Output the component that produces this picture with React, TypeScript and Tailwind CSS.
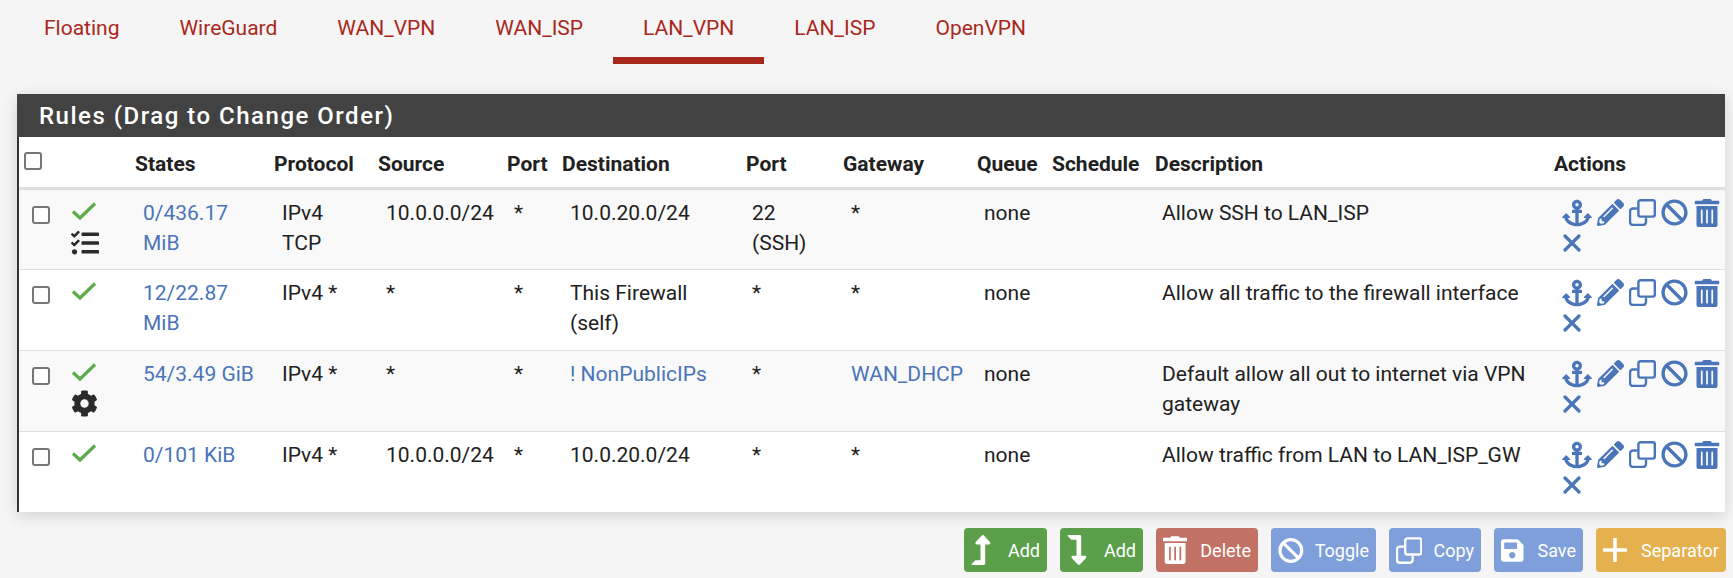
import {
  FaAnchor,
  FaBan,
  FaCog,
  FaLevelDownAlt,
  FaLevelUpAlt,
  FaPencilAlt,
  FaSave,
  FaTasks,
  FaTrashAlt,
} from "react-icons/fa";
import type { ReactNode } from "react";

const tabs = ["Floating", "WireGuard", "WAN_VPN", "WAN_ISP", "LAN_VPN", "LAN_ISP", "OpenVPN"];

const heads = [
  { label: "States", w: "w-[139px]" },
  { label: "Protocol", w: "w-[104px]" },
  { label: "Source", w: "w-[129px]" },
  { label: "Port", w: "w-[55px]" },
  { label: "Destination", w: "w-[184px]" },
  { label: "Port", w: "w-[97px]" },
  { label: "Gateway", w: "w-[134px]" },
  { label: "Queue", w: "w-[75px]" },
  { label: "Schedule", w: "w-[103px]" },
  { label: "Description", w: "w-[399px]" },
  { label: "Actions", w: "" },
];

type Rule = {
  states: string;
  proto: string;
  source: string;
  port: string;
  dest: string;
  destLink?: boolean;
  dport: string;
  gateway: string;
  gatewayLink?: boolean;
  desc: string;
  extra?: ReactNode;
  bg: string;
};

const rules: Rule[] = [
  {
    states: "0/436.17 MiB",
    proto: "IPv4 TCP",
    source: "10.0.0.0/24",
    port: "*",
    dest: "10.0.20.0/24",
    dport: "22 (SSH)",
    gateway: "*",
    desc: "Allow SSH to LAN_ISP",
    extra: <FaTasks className="text-[#2b2b2b] text-[28px] mt-[8px]" />,
    bg: "bg-[#f9f9f9]",
  },
  {
    states: "12/22.87 MiB",
    proto: "IPv4 *",
    source: "*",
    port: "*",
    dest: "This Firewall (self)",
    dport: "*",
    gateway: "*",
    desc: "Allow all traffic to the firewall interface",
    bg: "bg-white",
  },
  {
    states: "54/3.49 GiB",
    proto: "IPv4 *",
    source: "*",
    port: "*",
    dest: "! NonPublicIPs",
    destLink: true,
    dport: "*",
    gateway: "WAN_DHCP",
    gatewayLink: true,
    desc: "Default allow all out to internet via VPN gateway",
    extra: <FaCog className="text-[#2b2b2b] text-[27px] mt-[8px]" />,
    bg: "bg-[#f9f9f9]",
  },
  {
    states: "0/101 KiB",
    proto: "IPv4 *",
    source: "10.0.0.0/24",
    port: "*",
    dest: "10.0.20.0/24",
    dport: "*",
    gateway: "*",
    desc: "Allow traffic from LAN to LAN_ISP_GW",
    bg: "bg-white",
  },
];

const Check = () => (
  <svg viewBox="0 0 26 20" className="w-[26px] h-[20px]">
    <path d="M2 10.5 L9 17 L24 2.5" fill="none" stroke="#5cab4b" strokeWidth="3.2" />
  </svg>
);

const Cross = ({ className }: { className: string }) => (
  <svg viewBox="0 0 18 18" className={className}>
    <path d="M2 2 L16 16 M16 2 L2 16" fill="none" stroke="currentColor" strokeWidth="3.2" strokeLinecap="round" />
  </svg>
);

const Plus = () => (
  <svg viewBox="0 0 24 24" className="w-[24px] h-[24px] text-white">
    <path d="M12 1 V23 M1 12 H23" fill="none" stroke="currentColor" strokeWidth="3.6" strokeLinecap="round" />
  </svg>
);

const Clone = () => (
  <svg viewBox="0 0 27 27" className="w-[27px] h-[27px]">
    <g fill="none" stroke="currentColor" strokeWidth="2.4">
      <path d="M8.5 9.5 H4 a3 3 0 0 0 -3 3 V23 a3 3 0 0 0 3 3 H14 a3 3 0 0 0 3 -3 V18.5" />
      <rect x="9.4" y="1.2" width="16.4" height="16.4" rx="2" />
    </g>
  </svg>
);

const Actions = () => (
  <div className="flex flex-wrap items-center gap-x-[5px] gap-y-[6px] text-[#4a75b8] text-[27px] w-[164px]">
    <FaAnchor className="text-[30px]" />
    <FaPencilAlt />
    <Clone />
    <FaBan />
    <FaTrashAlt className="text-[28px]" />
    <Cross className="w-[18px] h-[18px] ml-[1px]" />
  </div>
);

const Box = ({ className }: { className: string }) => (
  <input
    type="checkbox"
    className={`appearance-none w-[18px] h-[18px] block rounded-[3px] border-2 border-[#767676] bg-white ${className}`}
  />
);

const FooterButton = ({
  icon,
  label,
  color,
  gap,
}: {
  icon: ReactNode;
  label: string;
  color: string;
  gap: string;
}) => (
  <button className={`h-[44px] flex items-center rounded-[4px] px-[7px] text-white text-[18px] ${gap} ${color}`}>
    {icon}
    <span>{label}</span>
  </button>
);

const App = () => {
  return (
    <div className="w-[1733px] h-[578px] overflow-hidden bg-[#f5f5f5] font-['Roboto',sans-serif]">
      {/* TABS */}
      <div className="flex h-[64px] pl-[14px] text-[21px] text-[#a9281c]">
        {tabs.map((tab) => (
          <div
            key={tab}
            className={`px-[30px] pt-[13px] ${tab === "LAN_VPN" ? "border-b-[7px] border-[#a9281c]" : ""}`}
          >
            {tab}
          </div>
        ))}
      </div>

      {/* PANEL */}
      <div className="ml-[17px] mt-[30px] w-[1708px] bg-white shadow-[0_4px_14px_rgba(0,0,0,0.14)]">
        <h2 className="h-[43px] bg-[#424242] pl-[22px] flex items-center text-white text-[24px] font-medium tracking-[1.5px]">
          Rules (Drag to Change Order)
        </h2>
        <div className="border-l-2 border-[#333] h-[375px]">
          <table className="w-full table-fixed text-[21px] leading-[30px] text-[#212121]">
            <colgroup>
              <col className="w-[43px]" />
              <col className="w-[73px]" />
              {heads.map((h, i) => (
                <col key={i} className={h.w} />
              ))}
            </colgroup>
            <thead>
              <tr className="h-[51px] border-b-[3px] border-[#dedede]">
                <th className="pl-[5px] align-top pt-[15px]">
                  <Box className="" />
                </th>
                <th />
                {heads.map((h, i) => (
                  <th key={i} className="text-left font-bold text-[21px] pt-[5px] whitespace-nowrap">
                    {h.label}
                  </th>
                ))}
              </tr>
            </thead>
            <tbody>
              {rules.map((r, i) => (
                <tr key={i} className={`h-[81px] border-b border-[#dedede] last:border-b-0 align-top ${r.bg}`}>
                  <td className="pl-[13px] pt-[16px]">
                    <Box className="" />
                  </td>
                  <td className="pl-[9px] pt-[11px]">
                    <Check />
                    {r.extra}
                  </td>
                  <td className="pl-2 pt-[8px] pr-[16px] text-[#4a75b8]">{r.states}</td>
                  <td className="pl-2 pt-[8px] pr-4">{r.proto}</td>
                  <td className="pl-2 pt-[8px] whitespace-nowrap">{r.source}</td>
                  <td className="pl-[7px] pt-[8px]">{r.port}</td>
                  <td className={`pl-2 pt-[8px] pr-2 ${r.destLink ? "text-[#4a75b8]" : ""}`}>{r.dest}</td>
                  <td className="pl-[6px] pt-[8px] pr-3">{r.dport}</td>
                  <td className={`pl-2 pt-[8px] ${r.gatewayLink ? "text-[#4a75b8]" : ""}`}>{r.gateway}</td>
                  <td className="pl-[7px] pt-[8px]">none</td>
                  <td />
                  <td className="pl-[7px] pt-[8px] pr-2">{r.desc}</td>
                  <td className="pl-2 pt-[8px]">
                    <Actions />
                  </td>
                </tr>
              ))}
            </tbody>
          </table>
        </div>
      </div>

      {/* FOOTER BUTTONS */}
      <div className="mt-[16px] w-[1726px] flex justify-end gap-[13px]">
        <FooterButton icon={<FaLevelUpAlt className="text-[30px] -ml-[5px]" />} label="Add" color="bg-[#5c9f4a]" gap="gap-[12px] w-[83px]" />
        <FooterButton icon={<FaLevelDownAlt className="text-[30px] -ml-[5px]" />} label="Add" color="bg-[#5c9f4a]" gap="gap-[12px] w-[83px]" />
        <FooterButton icon={<FaTrashAlt className="text-[28px]" />} label="Delete" color="bg-[#c27264]" gap="gap-[13px] w-[102px]" />
        <FooterButton icon={<FaBan className="text-[27px]" />} label="Toggle" color="bg-[#7e9fd9]" gap="gap-[11px] w-[105px]" />
        <FooterButton icon={<Clone />} label="Copy" color="bg-[#7e9fd9]" gap="gap-[11px] w-[92px]" />
        <FooterButton icon={<FaSave className="text-[27px]" />} label="Save" color="bg-[#7e9fd9]" gap="gap-[14px] w-[89px]" />
        <FooterButton icon={<Plus />} label="Separator" color="bg-[#e5b04e]" gap="gap-[14px] w-[130px]" />
      </div>
    </div>
  );
};

export default App;
